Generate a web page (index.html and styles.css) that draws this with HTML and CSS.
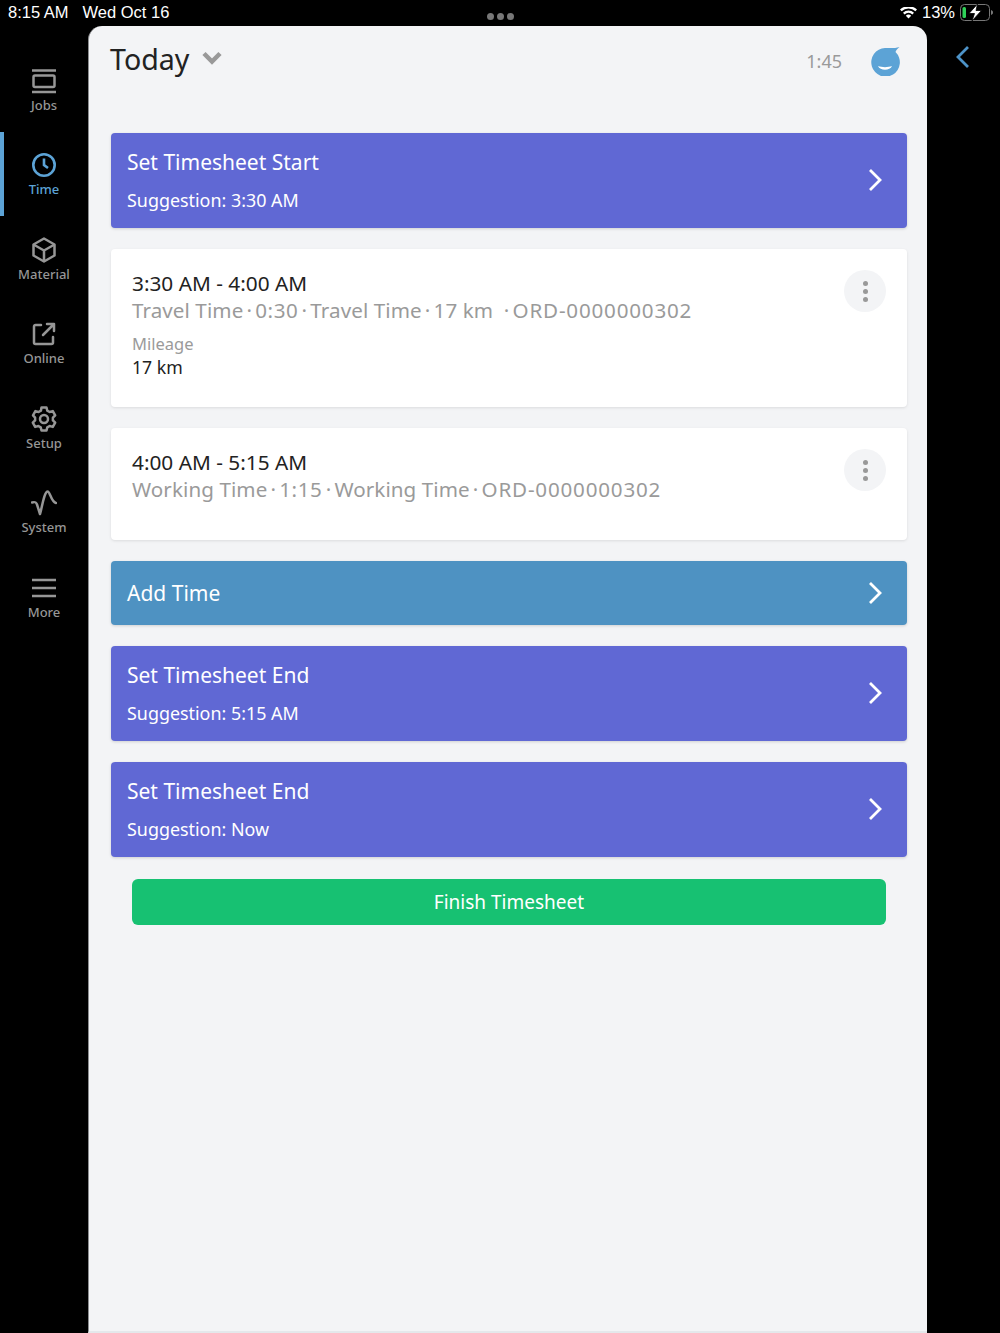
FILE: index.html
```html
<!DOCTYPE html>
<html lang="en">
<head>
    <meta charset="UTF-8">
    <meta name="viewport" content="width=device-width, initial-scale=1.0">
    <title>Today</title>
    <link rel="stylesheet" href="styles.css">
</head>
<body>
    <div class="status-bar">
        <div class="status-left"><span>8:15 AM</span><span>Wed Oct 16</span></div>
        <div class="status-dots"><i></i><i></i><i></i></div>
        <div class="status-right">
            <svg class="wifi" width="17" height="12" viewBox="0 0 17 12"><path d="M8.5 11.500 5.800 8.700a3.900 3.900 0 0 1 5.400 0zM4.600 7.400 3 5.700a7.900 7.900 0 0 1 11 0l-1.600 1.700a5.700 5.700 0 0 0-7.800 0zM1.600 4.300 0 2.600a12.200 12.200 0 0 1 17 0l-1.600 1.700a10 10 0 0 0-13.800 0z" fill="#fff"/></svg>
            <span>13%</span>
            <svg class="battery" width="33" height="17" viewBox="0 0 33 17">
                <rect x="0.500" y="0.500" width="29" height="16" rx="4" fill="none" stroke="#777"/>
                <rect x="2.500" y="3" width="3.500" height="11" rx="1.500" fill="#2fd158"/>
                <path d="M31 6c1.300.4 2 1.200 2 2.500s-.7 2.100-2 2.500z" fill="#777"/>
                <path d="M17.500 0 9 9.500h5.500L12 17l9.500-10.500H16z" fill="#fff" stroke="#000" stroke-width=".8"/>
            </svg>
        </div>
    </div>

    <div class="app">
        <nav class="sidebar">
            <a class="nav-item">
                <svg width="26" height="26" viewBox="0 0 26 26" fill="none" stroke="currentColor" stroke-width="2.500"><path d="M1 2.500h24M1 24h24"/><rect x="2.500" y="7.500" width="21" height="11.500" rx="1.500"/></svg>
                <span>Jobs</span>
            </a>
            <a class="nav-item active">
                <svg width="26" height="26" viewBox="0 0 26 26" fill="none" stroke="currentColor" stroke-width="2.600"><circle cx="13" cy="13" r="10.700"/><path d="M13 6.500V13l4 3"/></svg>
                <span>Time</span>
            </a>
            <a class="nav-item">
                <svg width="26" height="26" viewBox="0 0 26 26" fill="none" stroke="currentColor" stroke-width="2.500" stroke-linejoin="round"><path d="M13 1.500 23.500 7.500v11L13 24.500 2.500 18.500v-11z"/><path d="M2.500 7.500 13 13.500 23.500 7.500M13 13.500v11"/></svg>
                <span>Material</span>
            </a>
            <a class="nav-item">
                <svg width="26" height="26" viewBox="0 0 26 26" fill="none" stroke="currentColor" stroke-width="2.500" stroke-linecap="round" stroke-linejoin="round"><path d="M10 4H4.500A1.500 1.500 0 0 0 3 5.500v16A1.500 1.500 0 0 0 4.500 23h16a1.500 1.500 0 0 0 1.500-1.500V16"/><path d="M12 14 23 3M16 3h7v7"/></svg>
                <span>Online</span>
            </a>
            <a class="nav-item">
                <svg width="26" height="26" viewBox="0 0 26 26" fill="none" stroke="currentColor" stroke-width="2.500" stroke-linejoin="round"><circle cx="13" cy="13" r="4"/><path d="M10.500 1.500h5l.8 3.200 2.300 1.300 3.200-.9 2.400 4.200-2.300 2.300v2.800l2.300 2.300-2.400 4.200-3.200-.9-2.300 1.300-.8 3.200h-5l-.8-3.200-2.300-1.300-3.200.9-2.400-4.200 2.300-2.300v-2.800L2 9.300l2.400-4.200 3.200.9 2.300-1.300z"/></svg>
                <span>Setup</span>
            </a>
            <a class="nav-item">
                <svg width="26" height="26" viewBox="0 0 26 26" fill="none" stroke="currentColor" stroke-width="2.500" stroke-linecap="round" stroke-linejoin="round"><path d="M1 12.500c3-1 4-.5 5 2L9 24C11 18 13 2 16.500 1.500 19 1 20 12 25 13"/></svg>
                <span>System</span>
            </a>
            <a class="nav-item">
                <svg width="26" height="26" viewBox="0 0 26 26" fill="none" stroke="currentColor" stroke-width="2.600"><path d="M1 5h24M1 13h24M1 21h24"/></svg>
                <span>More</span>
            </a>
        </nav>

        <main class="panel">
            <header class="panel-header">
                <h1>Today</h1>
                <svg class="title-chevron" width="20" height="14" viewBox="0 0 20 14" fill="none" stroke="#999" stroke-width="4.500"><path d="M2 2.500l8 8 8-8"/></svg>
                <span class="total">1:45</span>
                <svg class="avatar" width="30" height="30" viewBox="0 0 30 30">
                    <path d="M15 2C19 2 25 2.500 29.500 1 27.500 3 26 4 25.500 6A14.300 14.300 0 1 1 15 2z" fill="#5ca3d6"/>
                    <path d="M8 20C12 21.500 18 21.500 22 20 20 25 10 25 8 20z" fill="#fff"/>
                </svg>
            </header>

            <div class="list">
                <a class="action action-purple">
                    <div>
                        <div class="action-title">Set Timesheet Start</div>
                        <div class="action-sub">Suggestion: 3:30 AM</div>
                    </div>
                    <svg class="chevron" width="14" height="24" viewBox="0 0 14 24" fill="none" stroke="#fff" stroke-width="2.800"><path d="M2 2l10 10L2 22"/></svg>
                </a>

                <div class="entry entry-tall">
                    <div class="entry-time">3:30 AM - 4:00 AM</div>
                    <div class="entry-info">Travel Time<span class="sep"> · </span><span class="num">0:30</span><span class="sep"> · </span>Travel Time<span class="sep"> · </span>17 km &nbsp;&#8202;<span class="sep">· </span><span class="order">ORD-0000000302</span></div>
                    <div class="entry-label">Mileage</div>
                    <div class="entry-value">17 km</div>
                    <button class="more-btn"><i></i><i></i><i></i></button>
                </div>

                <div class="entry entry-short">
                    <div class="entry-time">4:00 AM - 5:15 AM</div>
                    <div class="entry-info">Working Time<span class="sep"> · </span><span class="num">1:15</span><span class="sep"> · </span>Working Time<span class="sep"> · </span><span class="order">ORD-0000000302</span></div>
                    <button class="more-btn"><i></i><i></i><i></i></button>
                </div>

                <a class="action action-blue">
                    <div class="action-title">Add Time</div>
                    <svg class="chevron" width="14" height="24" viewBox="0 0 14 24" fill="none" stroke="#fff" stroke-width="2.800"><path d="M2 2l10 10L2 22"/></svg>
                </a>

                <a class="action action-purple">
                    <div>
                        <div class="action-title">Set Timesheet End</div>
                        <div class="action-sub">Suggestion: 5:15 AM</div>
                    </div>
                    <svg class="chevron" width="14" height="24" viewBox="0 0 14 24" fill="none" stroke="#fff" stroke-width="2.800"><path d="M2 2l10 10L2 22"/></svg>
                </a>

                <a class="action action-purple">
                    <div>
                        <div class="action-title">Set Timesheet End</div>
                        <div class="action-sub">Suggestion: Now</div>
                    </div>
                    <svg class="chevron" width="14" height="24" viewBox="0 0 14 24" fill="none" stroke="#fff" stroke-width="2.800"><path d="M2 2l10 10L2 22"/></svg>
                </a>

                <button class="finish">Finish Timesheet</button>
            </div>
        </main>

        <div class="back-col">
            <svg width="14" height="24" viewBox="0 0 14 24" fill="none" stroke="#4d93c8" stroke-width="2.800"><path d="M12 2 2 12l10 10"/></svg>
        </div>
    </div>
</body>
</html>
```

FILE: styles.css
```css
* {
    box-sizing: border-box;
}
html, body {
    height: 100%;
}
body {
    margin: 0;
    background: #000;
    font-family: "Noto Sans", sans-serif;
    overflow: hidden;
    display: flex;
    flex-direction: column;
}

/* status bar */
.status-bar {
    height: 26px;
    display: grid;
    grid-template-columns: 1fr auto 1fr;
    align-items: center;
    padding: 0 7px 1px 8px;
    color: #fff;
    font-family: "Liberation Sans", sans-serif;
    font-size: 16.500px;
}
.status-left {
    display: flex;
    gap: 14px;
}
.status-dots {
    display: flex;
    gap: 3px;
    padding-top: 8px;
}
.status-dots i {
    width: 7px;
    height: 7px;
    border-radius: 50%;
    background: #777;
}
.status-right {
    display: flex;
    justify-content: flex-end;
    align-items: center;
    gap: 5px;
}

.app {
    flex: 1;
    display: flex;
    min-height: 0;
}

/* left nav */
.sidebar {
    width: 88px;
    flex: none;
    padding-top: 21px;
}
.nav-item {
    height: 84.5px;
    display: flex;
    flex-direction: column;
    align-items: center;
    justify-content: center;
    gap: 2px;
    color: #969696;
    font-size: 13px;
    font-weight: 500;
    line-height: 18px;
    padding-top: 3px;
}
.nav-item.active {
    color: #5ca3d6;
    border-left: 4px solid #5ca3d6;
    padding-right: 4px;
}

/* main panel */
.panel {
    width: 839px;
    flex: none;
    background: #f3f4f6;
    border-left: 1px solid #8b8d90;
    border-bottom: 2px solid #e4e8eb;
    border-radius: 14px 14px 0 0;
    padding: 0 20px 0 22px;
}
.panel-header {
    height: 107px;
    display: flex;
    align-items: flex-start;
    padding: 13px 7px 0 0;
}
.panel-header h1 {
    margin: 0 0 0 -1px;
    font-size: 28.600px;
    font-weight: 400;
    line-height: 40px;
    color: #222;
}
.title-chevron {
    margin: 12px 0 0 13px;
}
.total {
    margin: 9px 28px 0 auto;
    color: #9a9a9a;
    font-size: 18px;
    line-height: 26px;
}
.avatar {
    margin-top: 7px;
}

.list {
    display: flex;
    flex-direction: column;
    gap: 21px;
}

.action {
    display: flex;
    align-items: center;
    justify-content: space-between;
    padding: 0 25px 0 16px;
    border-radius: 4px;
    color: #fff;
    box-shadow: 0 1px 3px rgba(0, 0, 0, 0.15);
}
.action-purple {
    height: 95px;
    padding-bottom: 1.500px;
    background: #6068d4;
}
.action-blue {
    height: 64px;
    background: #4e92c2;
}
.action-title {
    font-size: 21px;
    line-height: 28px;
}
.action-sub {
    font-size: 17.900px;
    line-height: 24px;
    margin-top: 12px;
}

.entry {
    position: relative;
    background: #fff;
    border-radius: 4px;
    padding: 21px 21px 0;
    box-shadow: 0 1px 3px rgba(0, 0, 0, 0.1);
}
.entry-tall {
    height: 158px;
}
.entry-short {
    height: 112px;
}
.entry-time {
    font-size: 20.800px;
    line-height: 27px;
    color: #222;
}
.entry-info {
    font-size: 20.600px;
    line-height: 27px;
    color: #9a9a9a;
    letter-spacing: 0.08px;
}
.entry-info .sep {
    margin: 0 -2.300px;
}
.entry-info .num {
    letter-spacing: 0.6px;
}
.entry-info .order {
    letter-spacing: 0.8px;
}
.entry-label {
    font-size: 16.500px;
    line-height: 22px;
    color: #9a9a9a;
    margin-top: 9px;
}
.entry-value {
    font-size: 17.700px;
    line-height: 24px;
    color: #222;
}
.more-btn {
    position: absolute;
    top: 21px;
    right: 21px;
    width: 42px;
    height: 42px;
    border: 0;
    border-radius: 50%;
    background: #f3f4f6;
    display: flex;
    flex-direction: column;
    align-items: center;
    justify-content: center;
    gap: 3px;
    padding: 0;
}
.more-btn i {
    width: 5px;
    height: 5px;
    border-radius: 50%;
    background: #999;
}

.finish {
    align-self: center;
    width: 754px;
    height: 46px;
    margin-top: 1px;
    border: 0;
    border-radius: 6px;
    background: #17c172;
    color: #fff;
    font-family: inherit;
    font-size: 19px;
}

.back-col {
    flex: 1;
    padding: 19px 0 0 29px;
}
```
